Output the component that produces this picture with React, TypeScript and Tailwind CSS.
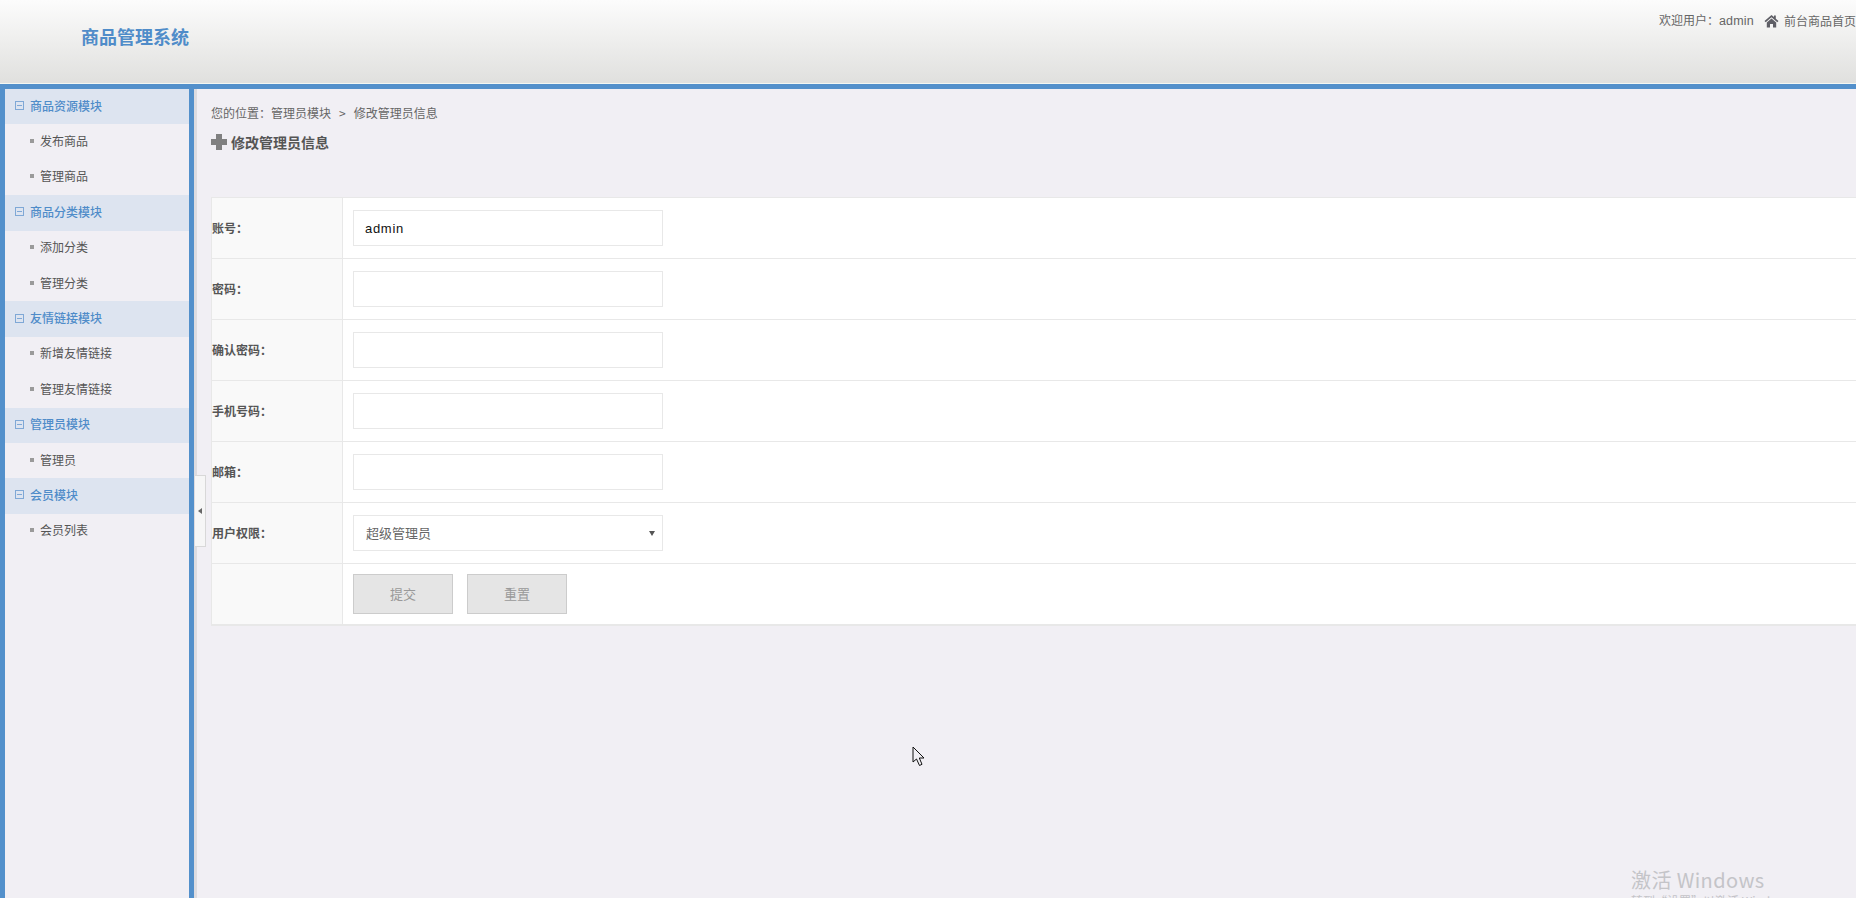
const font = "font-['Noto_Sans_CJK_SC','Liberation_Sans',sans-serif]";

const menu = [
  { title: "商品资源模块", items: ["发布商品", "管理商品"] },
  { title: "商品分类模块", items: ["添加分类", "管理分类"] },
  { title: "友情链接模块", items: ["新增友情链接", "管理友情链接"] },
  { title: "管理员模块", items: ["管理员"] },
  { title: "会员模块", items: ["会员列表"] },
];

function HomeIcon() {
  return (
    <svg width="15" height="14" viewBox="0 0 15 14" className="mr-[5px] shrink-0">
      <path d="M7.5 1 L0.5 7 L1.7 8.2 L7.5 3.2 L13.3 8.2 L14.5 7 L11.8 4.7 V1.5 H10 V3.1 Z" fill="#5f5f66" />
      <path d="M7.5 4.4 L2.8 8.4 V13.5 H6 V10 H9 V13.5 H12.2 V8.4 Z" fill="#5f5f66" />
    </svg>
  );
}

function PlusIcon() {
  return (
    <svg width="16" height="16" viewBox="0 0 16 16" className="mr-[4px] shrink-0">
      <path d="M5 0 H11 V5 H16 V11 H11 V16 H5 V11 H0 V5 H5 Z" fill="#808080" />
    </svg>
  );
}

function Sidebar() {
  return (
    <aside className="w-[194px] shrink-0 border-x-[5px] border-[#5390cb] bg-[#f1eff4]">
      {menu.map((group) => (
        <div key={group.title}>
          <div className="flex h-[35.4px] items-center bg-[#dde4f0] pb-[2px] pl-[10px] text-[12px] font-medium text-[#4f8cc9]">
            <span className="mr-[6px] flex h-[9px] w-[9px] items-center justify-center border border-[#7fa8d6]">
              <span className="h-px w-[5px] bg-[#7fa8d6]" />
            </span>
            {group.title}
          </div>
          {group.items.map((item) => (
            <div key={item} className="flex h-[35.4px] items-center pb-[2px] pl-[25px] text-[12px] text-[#555555]">
              <span className="mr-[6px] h-[4px] w-[4px] bg-[#9a9a9a]" />
              {item}
            </div>
          ))}
        </div>
      ))}
    </aside>
  );
}

function FormRow({ label, children }: { label?: string; children: React.ReactNode }) {
  return (
    <div className="flex h-[61px] border-b border-[#e8e8e8] last:h-[62px] last:border-b-2">
      <div className="flex w-[131px] shrink-0 items-center border-r border-[#e8e8e8] bg-[#f9f9f9] text-[12px] font-bold text-[#555555]">
        {label}
      </div>
      <div className="flex flex-1 items-center bg-white pl-[10px]">{children}</div>
    </div>
  );
}

function TextInput({ value }: { value?: string }) {
  return (
    <input
      readOnly
      value={value ?? ""}
      className="h-9 w-[310px] border border-[#e8e8e8] bg-white px-[11px] font-['Liberation_Sans'] text-[13px] tracking-[0.7px] text-[#111111] outline-none"
    />
  );
}

export default function App() {
  return (
    <div className={`relative flex h-[898px] w-[1856px] flex-col overflow-hidden bg-[#f1eff4] ${font}`}>
      <header className="flex h-[84px] shrink-0 justify-between border-b border-[#f4f7f2] bg-gradient-to-b from-[#fcfcfc] to-[#e0e0de]">
        <h1 className="mt-[23px] ml-[81px] text-[18px] leading-[26px] font-bold text-[#4f8cc9]">商品管理系统</h1>
        <div className="mt-[13px] flex h-[16px] items-center whitespace-nowrap text-[12px] text-[#666666]">
          <span className="mr-[10px]">
            欢迎用户：<span className="font-['Liberation_Sans'] text-[12.5px] tracking-[0.2px]">admin</span>
          </span>
          <HomeIcon />
          <span>前台商品首页</span>
        </div>
      </header>
      <div className="h-[5px] shrink-0 bg-[#5390cb]" />
      <div className="flex min-h-0 flex-1">
        <Sidebar />
        <main className="relative min-w-0 flex-1 border-l-[3px] border-[#dddce0] pl-[14px]">
          <div className="mt-[15px] flex h-[18px] items-center whitespace-nowrap text-[12px] text-[#666666]">
            您的位置：管理员模块
            <span className="mx-[8px]">{">"}</span>
            修改管理员信息
          </div>
          <div className="mt-[10px] flex h-[20px] items-center text-[14px] font-bold text-[#555555]">
            <PlusIcon />
            修改管理员信息
          </div>
          <div className="mt-[45px] border-t border-l border-[#e8e8e8]">
            <FormRow label="账号：">
              <TextInput value="admin" />
            </FormRow>
            <FormRow label="密码：">
              <TextInput />
            </FormRow>
            <FormRow label="确认密码：">
              <TextInput />
            </FormRow>
            <FormRow label="手机号码：">
              <TextInput />
            </FormRow>
            <FormRow label="邮箱：">
              <TextInput />
            </FormRow>
            <FormRow label="用户权限：">
              <div className="flex h-9 w-[310px] items-center justify-between border border-[#e8e8e8] bg-white pr-[7px] pl-[12px] text-[13px] text-[#666666]">
                超级管理员
                <span className="h-0 w-0 border-x-[3px] border-t-[5px] border-x-transparent border-t-[#555555]" />
              </div>
            </FormRow>
            <FormRow>
              <div className="flex gap-[14px]">
                <button className="h-10 w-[100px] border border-[#cccccc] bg-[#e5e5e5] text-[13px] text-[#999999]">提交</button>
                <button className="h-10 w-[100px] border border-[#cccccc] bg-[#e5e5e5] text-[13px] text-[#999999]">重置</button>
              </div>
            </FormRow>
          </div>
          {/* collapse handle */}
          <div className="absolute top-[386px] left-[-2px] flex h-[72px] w-[11px] items-center justify-center border border-l-0 border-[#d8d8d8] bg-[#f6f6f6]">
            <span className="h-0 w-0 border-y-[3px] border-r-[4px] border-y-transparent border-r-[#666666]" />
          </div>
        </main>
      </div>
      {/* mouse cursor */}
      <svg width="14" height="21" viewBox="0 0 14 21" className="absolute top-[746px] left-[912px]">
        <path d="M1 1 V16 L4.5 13 L7.5 19.5 L10 18.3 L7.3 12 H12 Z" fill="#f1eff4" stroke="#111111" strokeWidth="1" />
      </svg>
      {/* activation watermark */}
      <div className="absolute top-[866px] left-[1631px] text-[20px] leading-[28px] tracking-[0.4px] whitespace-nowrap text-[#c4c4c8]">激活 Windows</div>
      <div className="absolute top-[893px] left-[1631px] text-[12px] leading-[16px] whitespace-nowrap text-[#c4c4c8]">转到“设置”以激活 Windows。</div>
    </div>
  );
}
